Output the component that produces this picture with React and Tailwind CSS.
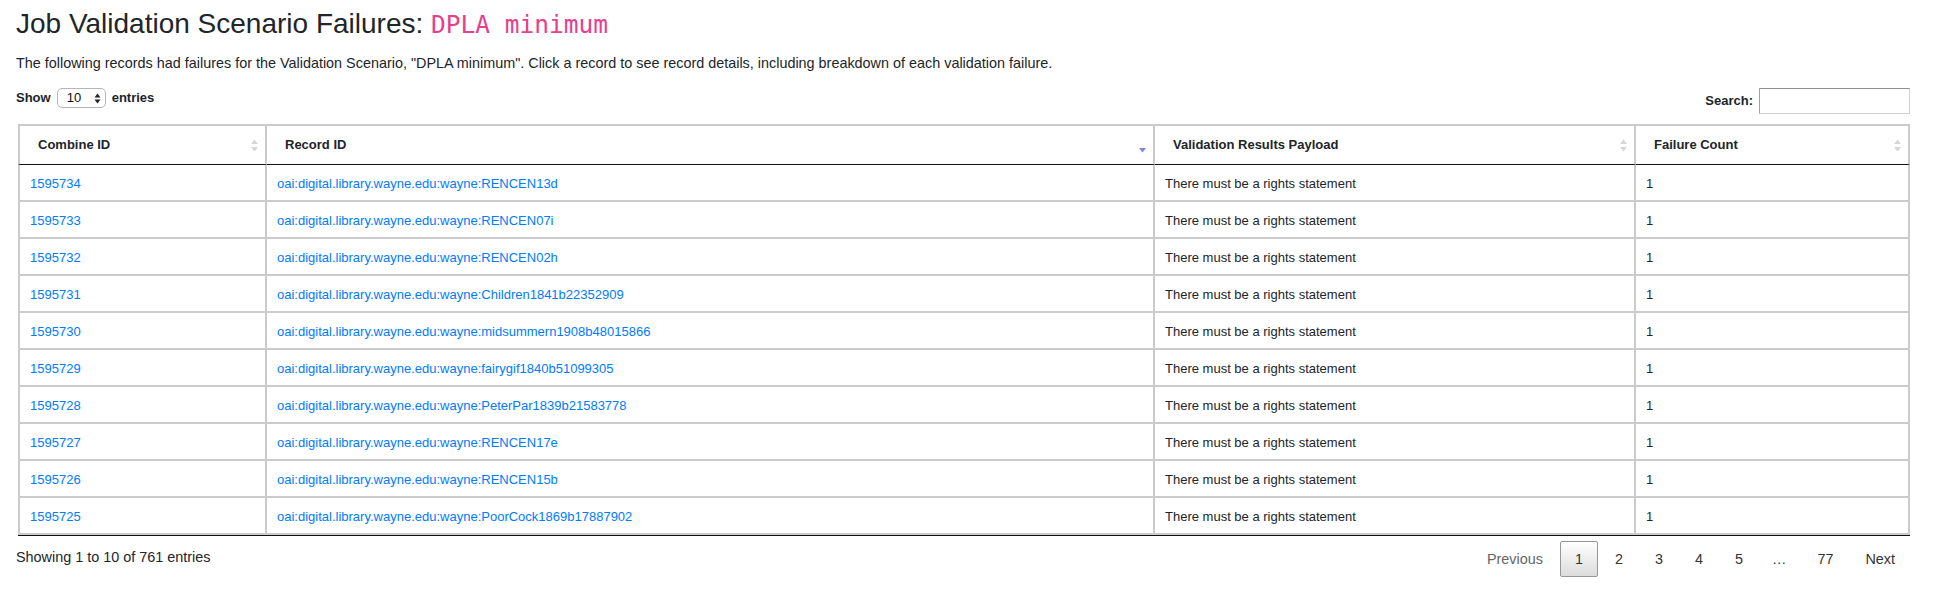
const PREFIX = 'oai:digital.library.wayne.edu:wayne:';

const rows = [
  ['1595734', 'RENCEN13d'],
  ['1595733', 'RENCEN07i'],
  ['1595732', 'RENCEN02h'],
  ['1595731', 'Children1841b22352909'],
  ['1595730', 'midsummern1908b48015866'],
  ['1595729', 'fairygif1840b51099305'],
  ['1595728', 'PeterPar1839b21583778'],
  ['1595727', 'RENCEN17e'],
  ['1595726', 'RENCEN15b'],
  ['1595725', 'PoorCock1869b17887902'],
];

const SortBoth = () => (
  <svg width="9" height="15" viewBox="0 0 9 15" className="shrink-0">
    <polygon points="1,6 4.5,1.5 8,6" fill="#d6d6d6" />
    <polygon points="1,9 4.5,13.5 8,9" fill="#d6d6d6" />
  </svg>
);

// only the down arrow, sitting a bit lower than the double arrow
const SortDesc = () => (
  <svg width="9" height="15" viewBox="0 0 9 15" className="shrink-0">
    <polygon points="1,10 4.5,14.5 8,10" fill="#8585d6" />
  </svg>
);

const HeaderCell = ({ label, icon, first }) => (
  <th
    className={`border-t-2 border-r-2 border-b border-[#cbcbcb] border-b-[#111] pl-[18px] pr-[6px] pt-[10px] pb-[10px] text-left align-middle font-bold leading-[18px] ${first ? 'border-l-2' : ''}`}
  >
    <div className="flex h-[18px] items-center justify-between">
      <span>{label}</span>
      {icon}
    </div>
  </th>
);

const PageButton = ({ children, current, disabled }) => (
  <a
    href="#"
    className={`ml-[2px] rounded-[2px] border px-[14px] py-[7px] text-center leading-[20px] ${
      current
        ? 'border-[#979797] bg-linear-to-b from-white to-[#dcdcdc] text-[#333]'
        : 'border-transparent'
    } ${disabled ? 'text-[#666]' : 'text-[#333]'}`}
  >
    {children}
  </a>
);

export default function App() {
  return (
    <div className="min-h-screen bg-white font-['Liberation_Sans',Arial,sans-serif] text-[#212529]">
      <div className="box-border w-[1910px] pl-4 pt-[7px]">
        <h3 className="mb-[11px] text-[28px] font-normal leading-[34px]">
          Job Validation Scenario Failures:{' '}
          <code className="font-['DejaVu_Sans_Mono',monospace] text-[24.5px] text-[#e83e8c]">DPLA minimum</code>
        </h3>
        <p className="text-[14.4px] leading-[21px]">
          The following records had failures for the Validation Scenario, "DPLA minimum". Click a record to see record
          details, including breakdown of each validation failure.
        </p>

        <div className="mt-[14px] flex items-start justify-between text-[13px] font-bold">
          <div className="flex h-[20px] items-center">
            <span>Show</span>
            <span className="ml-[6px] mr-[5px] flex h-[20px] w-[49px] items-center justify-between rounded-[5px] border border-[#b5b5b5] bg-white pl-[9px] pr-[4px] font-normal text-[#111]">
              <span>10</span>
              <svg width="7" height="11" viewBox="0 0 7 11">
                <polygon points="0.5,4.5 3.5,0.5 6.5,4.5" fill="#222" />
                <polygon points="0.5,6.5 3.5,10.5 6.5,6.5" fill="#222" />
              </svg>
            </span>
            <span className="ml-[1px]">entries</span>
          </div>
          <div className="flex h-[26px] items-center">
            <span>Search:</span>
            <input
              type="search"
              className="ml-[6px] h-[26px] w-[151px] border border-[#d0d0d0] border-l-[#a2a2a2] border-t-[#8f8f8f] bg-white px-1 font-normal outline-none"
            />
          </div>
        </div>

        <table className="mt-[10px] ml-[2px] w-[1892px] table-fixed border-separate border-spacing-0 border-b border-[#111] text-[13px]">
          <colgroup>
            <col className="w-[249px]" />
            <col className="w-[888px]" />
            <col className="w-[481px]" />
            <col />
          </colgroup>
          <thead>
            <tr>
              <HeaderCell first label="Combine ID" icon={<SortBoth />} />
              <HeaderCell label="Record ID" icon={<SortDesc />} />
              <HeaderCell label="Validation Results Payload" icon={<SortBoth />} />
              <HeaderCell label="Failure Count" icon={<SortBoth />} />
            </tr>
          </thead>
          <tbody>
            {rows.map(([id, rec]) => {
              const cell = 'border-r-2 border-b-2 border-[#cbcbcb] px-[10px] pt-[9px] pb-[7px] leading-[19px]';
              return (
                <tr key={id}>
                  <td className={`${cell} border-l-2`}>
                    <a href="#" className="text-[#007bff]">{id}</a>
                  </td>
                  <td className={cell}>
                    <a href="#" className="text-[#007bff]">{PREFIX + rec}</a>
                  </td>
                  <td className={cell}>There must be a rights statement</td>
                  <td className={cell}>1</td>
                </tr>
              );
            })}
          </tbody>
        </table>

        <div className="flex items-start justify-between text-[14.4px]">
          <div className="mt-[11px] leading-[21px]">Showing 1 to 10 of 761 entries</div>
          <div className="mt-[5px] flex items-center">
            <PageButton disabled>Previous</PageButton>
            <PageButton current>1</PageButton>
            <PageButton>2</PageButton>
            <PageButton>3</PageButton>
            <PageButton>4</PageButton>
            <PageButton>5</PageButton>
            <span className="px-[14px] leading-[20px] text-[#333]">…</span>
            <PageButton>77</PageButton>
            <PageButton>Next</PageButton>
          </div>
        </div>
      </div>
    </div>
  );
}
